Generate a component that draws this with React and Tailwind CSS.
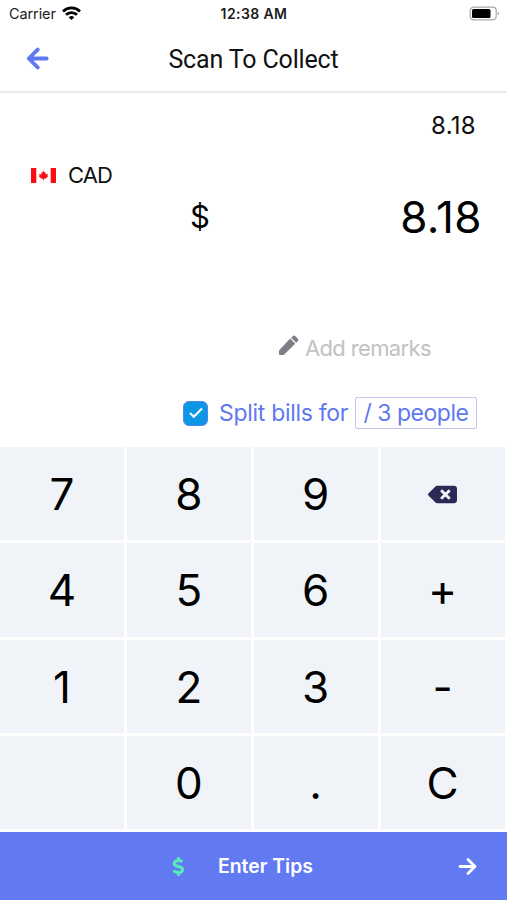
import React from 'react';
import { FaBackspace } from 'react-icons/fa';
import { FaDollarSign } from 'react-icons/fa6';

const KEYS = ['7', '8', '9', 'back', '4', '5', '6', '+', '1', '2', '3', '-', '', '0', '.', 'C'];

const StatusBar = () => (
  <div className="grid grid-cols-3 items-center h-7 pl-[9px] pr-[7px] text-[#1c1c1c]">
    <div className="flex items-center gap-[6px]">
      <span className="text-[14.5px] tracking-[-0.1px]">Carrier</span>
      <svg className="w-[19px] h-[15px] mb-[2px]" viewBox="0 0 19 15" fill="none" stroke="#000" strokeWidth="2.8">
        <path d="M1 5.4a12.2 12.2 0 0 1 17 0" />
        <path d="M4 8.8a7.8 7.8 0 0 1 11 0" />
        <path d="M6.7 11.2a4.2 4.2 0 0 1 5.6 0L9.5 14z" fill="#000" stroke="none" />
      </svg>
    </div>
    <span className="text-center text-[14px] font-semibold tracking-[0.4px] whitespace-nowrap mr-[1px] mb-px">12:38 AM</span>
    <svg className="w-[31px] h-[15px] mb-[2px] justify-self-end" viewBox="0 0 31 15">
      <rect x="1.2" y="1.2" width="26" height="12.6" rx="3.5" fill="#fff" stroke="#a9a9a9" strokeWidth="1.2" />
      <rect x="3" y="3" width="18.5" height="9" rx="1.5" fill="#000" />
      <path d="M28.8 5.4q2.6 2.1 0 4.2z" fill="#a9a9a9" />
    </svg>
  </div>
);

const Header = () => (
  <header className="grid grid-cols-[60px_1fr_60px] items-center h-[65px] border-b-2 border-[#ebebeb]">
    <svg className="ml-[26px] w-[23px] h-[23px] mb-[2px]" viewBox="0 0 23 23" fill="none" stroke="#6078ef" strokeWidth="3.8" strokeLinecap="round" strokeLinejoin="round">
      <path d="M20.7 11.5H3M11.7 2.6L2.8 11.5l8.9 8.9" />
    </svg>
    <h1 className="text-center font-['Roboto',sans-serif] text-[25px] tracking-[-0.15px] text-[#111]">Scan To Collect</h1>
  </header>
);

const Flag = () => (
  <svg className="w-[25px] h-[15px]" viewBox="0 0 25 15" fill="#fb0d12">
    <path d="M0 0h5.3v15H0zM19.7 0H25v15h-5.3z" />
    <path d="M12.5 2.8l1.3 2 .9-.4-.1 2.1 2.5-.5-.7 2 .7.6-2.9 2.2h-1.3v1.4h-.8v-1.4h-1.3L7.9 8.6l.7-.6-.7-2 2.5.5-.1-2.1.9.4z" />
  </svg>
);

const Pencil = () => (
  <svg className="w-[21px] h-[21px] mb-[5px]" viewBox="0 0 21 21" fill="#7d7f84">
    <path d="M12.2 3.6l5.1 5.1L6.4 19.3c-.4.4-.8.6-1.4.6H1.9c-.6 0-.9-.3-.9-.9v-2.8c0-.6.2-1 .6-1.4z" />
    <path d="M13.1 2.7L14.6 1.2c.8-.8 2.1-.8 2.9 0l2.2 2.2c.8.8.8 2.1 0 2.9l-1.5 1.5z" />
  </svg>
);

const Amount = () => (
  <section className="h-[354px] text-[#111]">
    <div className="h-16 pt-[16px] pr-[31px] text-right text-[24px] leading-[34px] tracking-[0.3px]">8.18</div>
    <div className="flex items-center h-9 pt-[1px] pl-[31px] gap-[12px]">
      <Flag />
      <span className="text-[22px] tracking-[-0.9px]">CAD</span>
    </div>
    <div className="flex items-center justify-between h-12 pl-[190px] pr-[25px]">
      <span className="text-[31px] text-black">$</span>
      <span className="text-[44px] tracking-[0.4px] text-black">8.18</span>
    </div>
    <div className="flex items-center h-10 mt-[87px] pl-[278px] gap-[6px]">
      <Pencil />
      <span className="text-[22px] tracking-[-0.65px] text-[#c2c2c2] whitespace-nowrap">Add remarks</span>
    </div>
    <div className="flex items-center h-[34px] mt-[28px] pl-[183px] text-[#6078ef]">
      <div className="flex items-center justify-center w-[25px] h-[25px] rounded-[6px] border border-[#5585e8] bg-[#0b96e6]">
        <svg className="w-[14px] h-[12px] mb-px" viewBox="0 0 14 12" fill="none" stroke="#fff" strokeWidth="2">
          <path d="M1 6l3.8 3.8L13 1.5" />
        </svg>
      </div>
      <span className="ml-[11px] w-[136px] text-[23px] tracking-[-0.3px] whitespace-nowrap">Split bills for</span>
      <span className="flex items-center justify-center w-[122px] h-8 border-[1.5px] border-[#c3c4f3] rounded-[2px] text-[23px] tracking-[-0.5px] whitespace-nowrap">/ 3 people</span>
    </div>
  </section>
);

const Keypad = () => (
  <div className="grid grid-cols-4 gap-[3px] h-[385px] pr-[2.5px] pb-[3px]">
    {KEYS.map((key, i) => (
      <button key={i} className="flex items-center justify-center pt-px bg-[#f0f4f8] text-[44px] leading-none text-black">
        {key === 'back' ? <FaBackspace className="w-[29px] h-[29px] text-[#2d2856]" /> : key}
      </button>
    ))}
  </div>
);

const TipsBar = () => (
  <footer className="flex items-center h-[68px] pl-[172px] pr-[30px] bg-[#6179f1] text-white">
    <FaDollarSign className="w-[13px] h-[19px] text-[#58efb5] stroke-[#58efb5] stroke-[20px]" />
    <span className="ml-[33px] pt-px text-[19.4px] font-semibold whitespace-nowrap">Enter Tips</span>
    <svg className="ml-auto w-[19px] h-[19px]" viewBox="0 0 19 19" fill="none" stroke="currentColor" strokeWidth="2.8" strokeLinecap="round" strokeLinejoin="round">
      <path d="M2 9.5h15M10 2.5l7 7-7 7" />
    </svg>
  </footer>
);

const App = () => {
  return (
    <div className="flex flex-col w-full h-[900px] overflow-hidden bg-white font-['Inter',sans-serif]">
      <StatusBar />
      <Header />
      <Amount />
      <Keypad />
      <TipsBar />
    </div>
  );
};

export default App;
